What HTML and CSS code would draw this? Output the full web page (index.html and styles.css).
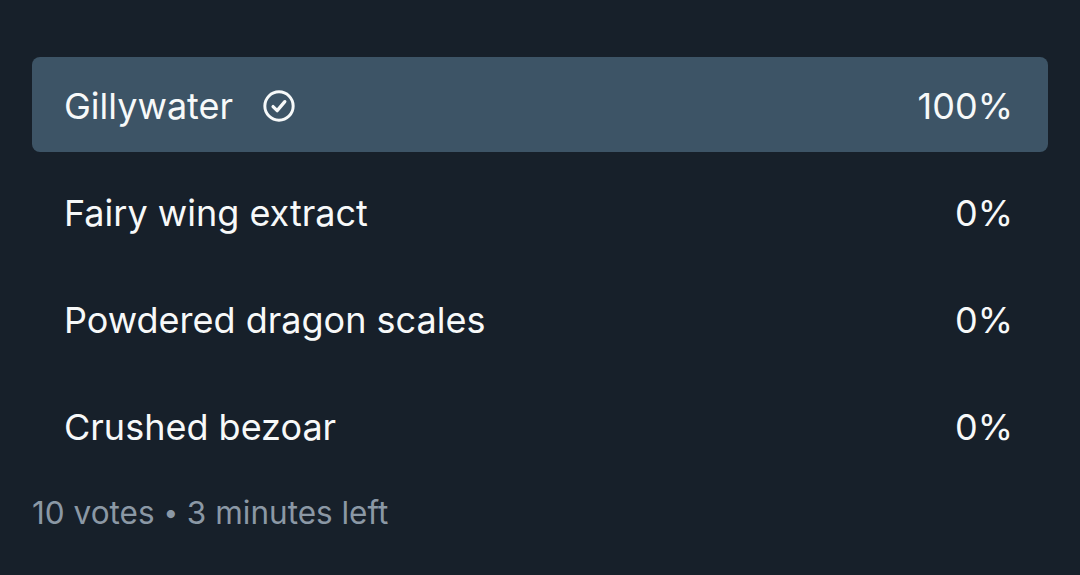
FILE: index.html
```html
<!DOCTYPE html>
<html>
<head>
<meta charset="utf-8">
<link rel="stylesheet" href="styles.css">
</head>
<body>
<div class="poll">
  <div class="options">
    <div class="option winner">
      <div class="label">Gillywater
        <svg class="check" viewBox="0 0 24 24" width="34" height="34"><circle cx="12" cy="12" r="10" fill="none" stroke="#f7f9f9" stroke-width="2.1"/><path d="M7.8 12.4l2.9 2.9 5.4-6.4" fill="none" stroke="#f7f9f9" stroke-width="2.3" stroke-linecap="round" stroke-linejoin="round"/></svg>
      </div>
      <div class="pct">100%</div>
    </div>
    <div class="option">
      <div class="label">Fairy wing extract</div>
      <div class="pct">0%</div>
    </div>
    <div class="option">
      <div class="label">Powdered dragon scales</div>
      <div class="pct">0%</div>
    </div>
    <div class="option">
      <div class="label">Crushed bezoar</div>
      <div class="pct">0%</div>
    </div>
  </div>
  <div class="meta">10 votes <span class="dot">•</span> 3 minutes left</div>
</div>
</body>
</html>
```
FILE: styles.css
```css
html, body {
  margin: 0;
  padding: 0;
  background: #17202a;
  width: 1080px;
  height: 575px;
  overflow: hidden;
}
.poll {
  padding: 58px 32px 0 32px;
  font-family: "Inter", "Roboto", "Liberation Sans", sans-serif;
  color: #f7f9f9;
}
.options {
  display: flex;
  flex-direction: column;
  gap: 12px;
}
.option {
  height: 95px;
  display: flex;
  align-items: center;
  justify-content: space-between;
  padding: 2px 35px 0 32px;
  box-sizing: border-box;
  border-radius: 8px;
  font-size: 36px;
}
.option.winner {
  background: #3d5466;
  margin-top: -1px;
}
.label {
  display: flex;
  align-items: center;
  gap: 29px;
}
.check {
  display: block;
}
.meta {
  margin-top: 20px;
  font-size: 31.5px;
  color: #8b98a5;
  line-height: 40px;
}
.dot {
  font-size: 26px;
  vertical-align: 2px;
}
```
